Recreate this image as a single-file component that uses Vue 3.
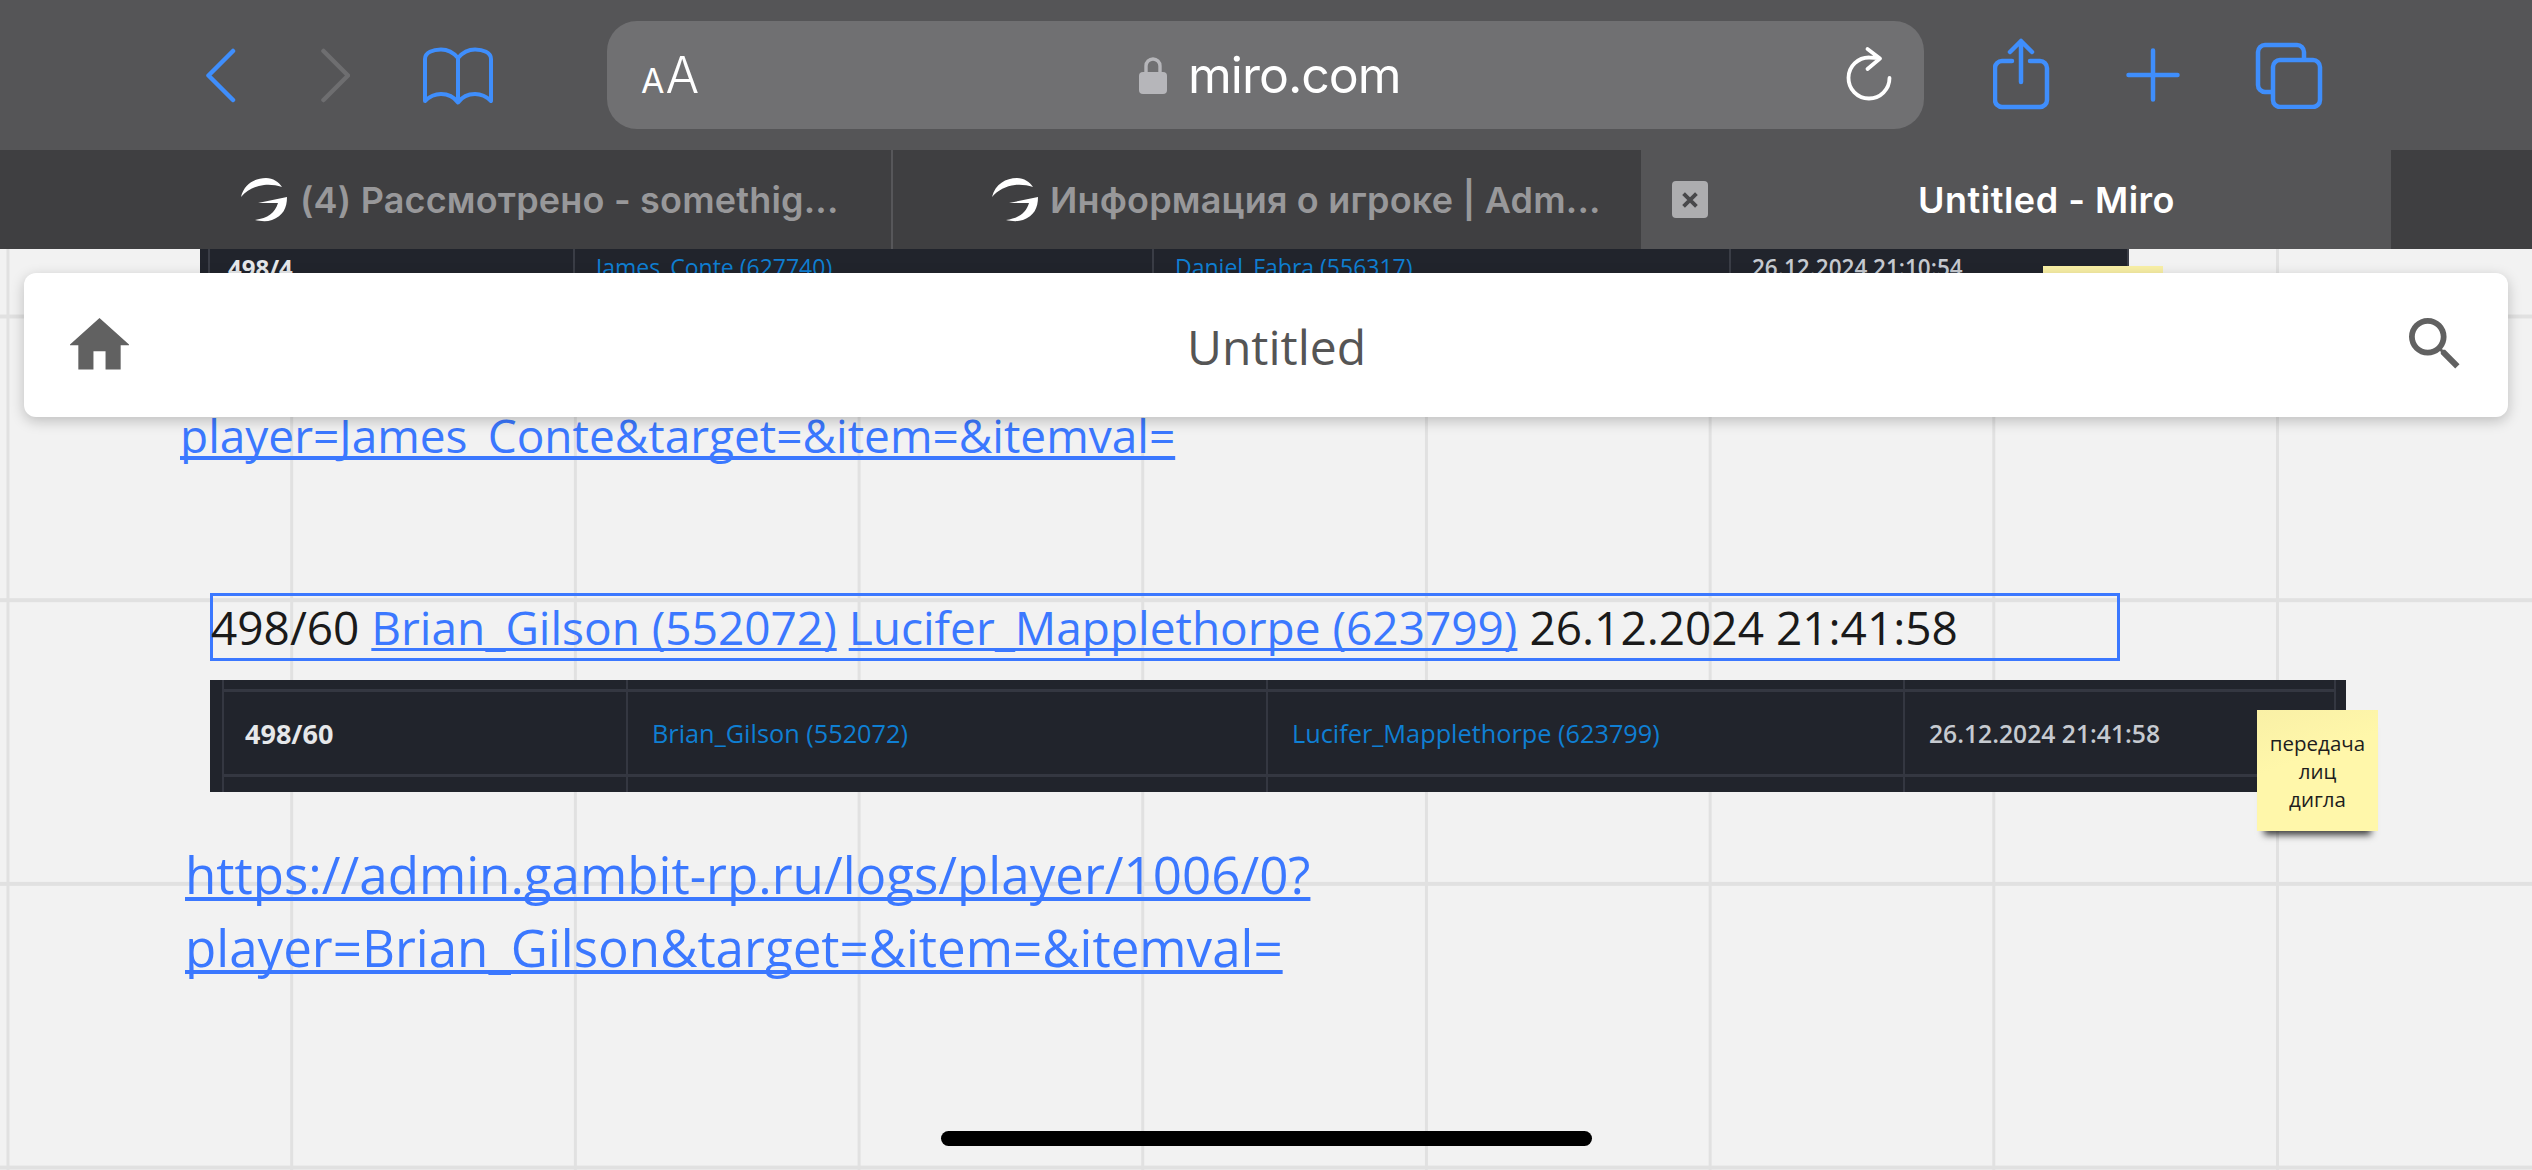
<script setup>
const rows = [
  { kind: 'head', id: '', a: '', b: '', d: '' },
  { kind: 'data', id: '498/60', a: 'Brian_Gilson (552072)', b: 'Lucifer_Mapplethorpe (623799)', d: '26.12.2024 21:41:58' },
  { kind: 'foot', id: '', a: '', b: '', d: '' }
]
const favTop = 'M241 197C244 184 255 178 266 178C273 178 279 182 282 187C276 185 270 184.500 264 185C255 186 247 190 241 197Z'
const favBottom = 'M258 203L287 197C287 208 283 216 272 220C266 222 260 221 255 220C268 218 275 213 278 203Z'
</script>

<template>
  <div class="page">
    <header class="toolbar">
      <svg class="ico back" viewBox="0 0 32 57"><path d="M29 4 4.5 28.5 29 53" /></svg>
      <svg class="ico fwd" viewBox="0 0 32 57"><path d="M5.5 4 30 28.5 5.5 53" /></svg>
      <svg class="ico book" viewBox="0 0 73 61"><path d="M37 13C32 7 26 4.5 20 4.5 12 4.5 4 7.5 4 14V56C9 51 14 49 20 49 27 49 33 52 37 57.5 41 52 47 49 54 49 60 49 65 51 70 56V14C70 7.5 62 4.5 54 4.5 48 4.5 42 7 37 13ZM37 13V57.5" /></svg>
      <div class="address">
        <span class="aa"><small>A</small>A</span>
        <span class="domain">
          <svg class="lock" viewBox="0 0 28 38"><path d="M7 17V10a7 7 0 0 1 14 0v7" fill="none" stroke="#b6b6ba" stroke-width="3.4"/><rect y="16" width="28" height="22" rx="4" fill="#b6b6ba"/></svg>
          miro.com
        </span>
        <svg class="reload" viewBox="0 0 46 56"><path d="M34 11.5C30 10.7 27 10.5 23.5 10.5A20.5 20.5 0 1 0 43.5 31M21.5 2 34 11.5 21.5 22" /></svg>
      </div>
      <svg class="ico share" viewBox="0 0 58 74"><path d="M19 23H9a7 7 0 0 0-7 7V62a7 7 0 0 0 7 7H47a7 7 0 0 0 7-7V30a7 7 0 0 0-7-7H37M28 44V3M17 14 28 3 39 14" /></svg>
      <svg class="ico plus" viewBox="0 0 54 54"><path d="M27 2.5v49M2.5 27h49" /></svg>
      <svg class="ico tabs-ico" viewBox="0 0 68 68"><path d="M17 51H10a7 7 0 0 1-7-7V11a7 7 0 0 1 7-7H42a7 7 0 0 1 7 7v7" /><rect x="18" y="19" width="47" height="47" rx="7" /></svg>
    </header>

    <nav class="tabbar">
      <div class="tab first">
        <svg class="fav" viewBox="241 178 46 44"><path :d="favTop" /><path :d="favBottom" /></svg>
        <span>(4) Рассмотрено - somethig...</span>
      </div>
      <div class="tab second">
        <svg class="fav" viewBox="241 178 46 44"><path :d="favTop" /><path :d="favBottom" /></svg>
        <span>Информация о игроке | Adm...</span>
      </div>
      <div class="tab active">
        <span class="close"><svg viewBox="0 0 14 14"><path d="M2 2l10 10M12 2 2 12" /></svg></span>
        <span class="active-title">Untitled - Miro</span>
      </div>
      <div class="tab tail"></div>
    </nav>

    <main class="canvas">
      <div class="shot shot-top">
        <div class="cell c1"><b>498/4</b></div>
        <div class="cell c2"><a>James_Conte (627740)</a></div>
        <div class="cell c3"><a>Daniel_Fabra (556317)</a></div>
        <div class="cell c4"><i>26.12.2024 21:10:54</i></div>
      </div>
      <div class="sticky-top"></div>

      <a class="link link-a">player=James_Conte&amp;target=&amp;item=&amp;itemval=</a>

      <div class="selected">
        498/60 <a>Brian_Gilson (552072)</a> <a>Lucifer_Mapplethorpe (623799)</a> 26.12.2024 21:41:58
      </div>

      <div class="shot shot-main">
        <div v-for="r in rows" :key="r.kind" class="row" :class="r.kind">
          <div class="cell c1"><b>{{ r.id }}</b></div>
          <div class="cell c2"><a>{{ r.a }}</a></div>
          <div class="cell c3"><a>{{ r.b }}</a></div>
          <div class="cell c4"><i>{{ r.d }}</i></div>
        </div>
      </div>

      <div class="sticky">
        <span>передача</span>
        <span>лиц</span>
        <span>дигла</span>
      </div>

      <a class="link link-b">https://admin.gambit-rp.ru/logs/player/1006/0?<br />player=Brian_Gilson&amp;target=&amp;item=&amp;itemval=</a>

      <div class="topbar">
        <svg class="home" viewBox="3 3 18 17.2"><path d="M10 20v-6h4v6h5v-8h3L12 3 2 12h3v8z" /></svg>
        <span class="board-title">Untitled</span>
        <svg class="search" viewBox="3 3 18 18"><path d="M15.5 14h-.79l-.28-.27A6.47 6.47 0 0 0 16 9.5 6.5 6.5 0 1 0 9.5 16c1.61 0 3.09-.59 4.23-1.57l.27.28v.79l5 4.99L20.49 19l-4.99-5zm-6 0C7.01 14 5 11.99 5 9.5S7.01 5 9.5 5 14 7.01 14 9.5 11.99 14 9.5 14z" /></svg>
      </div>

      <div class="home-indicator"></div>
    </main>
  </div>
</template>

<style>
html, body { margin: 0; background: #f2f2f2; }
</style>

<style scoped>
.page {
  width: 2532px;
  height: 1170px;
  display: flex;
  flex-direction: column;
  overflow: hidden;
  font-family: "Open Sans", sans-serif;
}
.toolbar {
  height: 150px;
  flex: none;
  display: flex;
  align-items: center;
  background: #555557;
  padding-left: 204px;
  box-sizing: border-box;
}
.ico { fill: none; stroke: #3f8efc; stroke-width: 4.5; stroke-linecap: round; stroke-linejoin: round; flex: none; }
.back { width: 32px; height: 57px; }
.fwd { width: 32px; height: 57px; margin-left: 82px; stroke: #6e6e70; }
.book { width: 73px; height: 61px; margin-left: 71px; stroke-width: 4; }
.address {
  width: 1317px;
  height: 108px;
  margin-left: 113px;
  border-radius: 30px;
  background: #707072;
  display: flex;
  align-items: center;
  position: relative;
  padding: 0 32px 0 34px;
  box-sizing: border-box;
  color: #fff;
  font-family: Inter, sans-serif;
}
.aa { font-size: 50px; line-height: 1; font-weight: 300; }
.aa small { font-size: 34px; margin-right: 1px; font-weight: 400; }
.domain {
  position: absolute;
  left: 532px;
  top: 0;
  height: 108px;
  display: flex;
  align-items: center;
  gap: 21px;
  font-size: 50px;
  letter-spacing: -1px;
}
.lock { width: 28px; height: 38px; }
.reload { width: 46px; height: 56px; margin-left: auto; fill: none; stroke: #fff; stroke-width: 3.8; stroke-linecap: round; stroke-linejoin: round; overflow: visible; }
.share { width: 58px; height: 74px; margin-left: 69px; }
.plus { width: 54px; height: 54px; margin-left: 75px; }
.tabs-ico { width: 68px; height: 68px; margin-left: 75px; }

.tabbar {
  height: 99px;
  flex: none;
  display: flex;
  background: #3f3f41;
  font-family: Inter, sans-serif;
  font-size: 36px;
  font-weight: 600;
  letter-spacing: .18px;
  color: #98989a;
}
.tab { display: flex; align-items: center; box-sizing: border-box; white-space: nowrap; }
.first { width: 893px; padding-left: 241px; border-right: 2px solid #57575a; }
.first .fav { margin-right: 13px; }
.second { width: 748px; padding-left: 99px; }
.second .fav { margin-right: 12px; }
.fav { width: 46px; height: 44px; fill: #fff; flex: none; }
.active { width: 750px; background: #555557; color: #fff; position: relative; padding-left: 31px; letter-spacing: .5px; }
.active-title { margin-left: 210px; }
.close { width: 36px; height: 37px; border-radius: 4px; background: #adadaf; display: flex; align-items: center; justify-content: center; }
.close svg { width: 18px; height: 18px; fill: none; stroke: #48484a; stroke-width: 3; }
.tail { flex: 1; }

.canvas {
  flex: 1;
  position: relative;
  background-color: #f2f2f2;
  background-image:
    linear-gradient(to right, #e1e1e1 3px, transparent 3px),
    linear-gradient(to bottom, #e1e1e1 4px, transparent 4px);
  background-size: 283.7px 283.7px;
  background-position: 6.5px 0, 0 65.5px;
}
.shot { position: absolute; background: #21242c; overflow: hidden; }
.shot a { color: #0f7fd3; }
.cell { display: flex; align-items: center; box-sizing: border-box; white-space: nowrap; }
.cell b { color: #e6e8ea; font-weight: 700; }
.cell i { color: #c6cad0; font-style: normal; font-weight: 600; }

.shot-top {
  left: 200px; top: 0; width: 1929px; height: 36px;
  display: grid;
  grid-template-columns: 375px 579px 577px 398px;
  font-size: 23px;
}
.shot-top .cell { height: 36px; border-right: 2px solid #3a3d46; }
.shot-top .c1 { border-left: 2px solid #3a3d46; margin-left: 8px; padding-left: 18px; font-size: 24px; }
.shot-top .c2, .shot-top .c3, .shot-top .c4 { padding-left: 21px; }
.shot-top .c4 { font-size: 22.5px; }
.sticky-top { position: absolute; left: 2043px; top: 17px; width: 120px; height: 20px; background: #f9f0a6; }

.link {
  color: #3b78ff;
  text-decoration: underline;
  text-decoration-thickness: 4px;
  text-underline-offset: 3px;
  text-decoration-skip-ink: none;
  position: absolute;
  white-space: nowrap;
}
.link-a { left: 180px; top: 150px; font-size: 46px; line-height: 73px; }
.link-b { left: 185px; top: 589px; font-size: 51.1px; line-height: 73px; }

.selected {
  position: absolute;
  left: 210px;
  top: 344px;
  width: 1910px;
  height: 68px;
  box-sizing: border-box;
  border: 3px solid #3b78ff;
  font-size: 46px;
  line-height: 62px;
  color: #1a1a1a;
  white-space: nowrap;
  text-indent: -2px;
}
.selected a {
  color: #3b78ff;
  text-decoration: underline;
  text-decoration-thickness: 3px;
  text-underline-offset: 3px;
  text-decoration-skip-ink: none;
}

.shot-main { left: 210px; top: 431px; width: 2136px; height: 112px; display: flex; flex-direction: column; padding: 0 10px 0 12px; box-sizing: border-box; }
.row { display: grid; grid-template-columns: 406px 640px 637px 431px; border-bottom: 3px solid #343741; }
.row.head { height: 10px; }
.row.data { height: 86px; font-size: 25.3px; }
.row.foot { height: 16px; border-bottom: 0; }
.row .cell { border-right: 2px solid #343741; }
.row .c1 { padding-left: 21px; border-left: 2px solid #343741; font-size: 27px; }
.row .c2, .row .c3, .row .c4 { padding-left: 24px; }
.row .c4 { font-size: 24.7px; }

.sticky {
  position: absolute;
  left: 2257px;
  top: 461px;
  width: 121px;
  height: 121px;
  background: linear-gradient(160deg, #f9f0a6, #fff7aa 40%);
  display: flex;
  flex-direction: column;
  align-items: center;
  justify-content: center;
  font-size: 20.5px;
  line-height: 28px;
  color: #1d1d1d;
  box-shadow: 0 11px 7px -7px rgba(0, 0, 0, .75);
}

.topbar {
  position: absolute;
  left: 24px;
  top: 24px;
  width: 2484px;
  height: 144px;
  border-radius: 12px;
  background: #fff;
  box-shadow: 0 4px 14px rgba(0, 0, 0, .22);
  display: flex;
  align-items: center;
  justify-content: space-between;
  padding: 0 46px;
  box-sizing: border-box;
}
.home { width: 59px; height: 52px; fill: #616161; margin-top: -3px; }
.board-title { font-size: 48px; color: #555; margin-left: 16px; padding-top: 2px; }
.search { width: 54px; height: 52px; fill: #616161; margin-top: -2px; }

.home-indicator {
  position: absolute;
  left: 941px;
  top: 882px;
  width: 651px;
  height: 15px;
  border-radius: 8px;
  background: #000;
}
</style>
